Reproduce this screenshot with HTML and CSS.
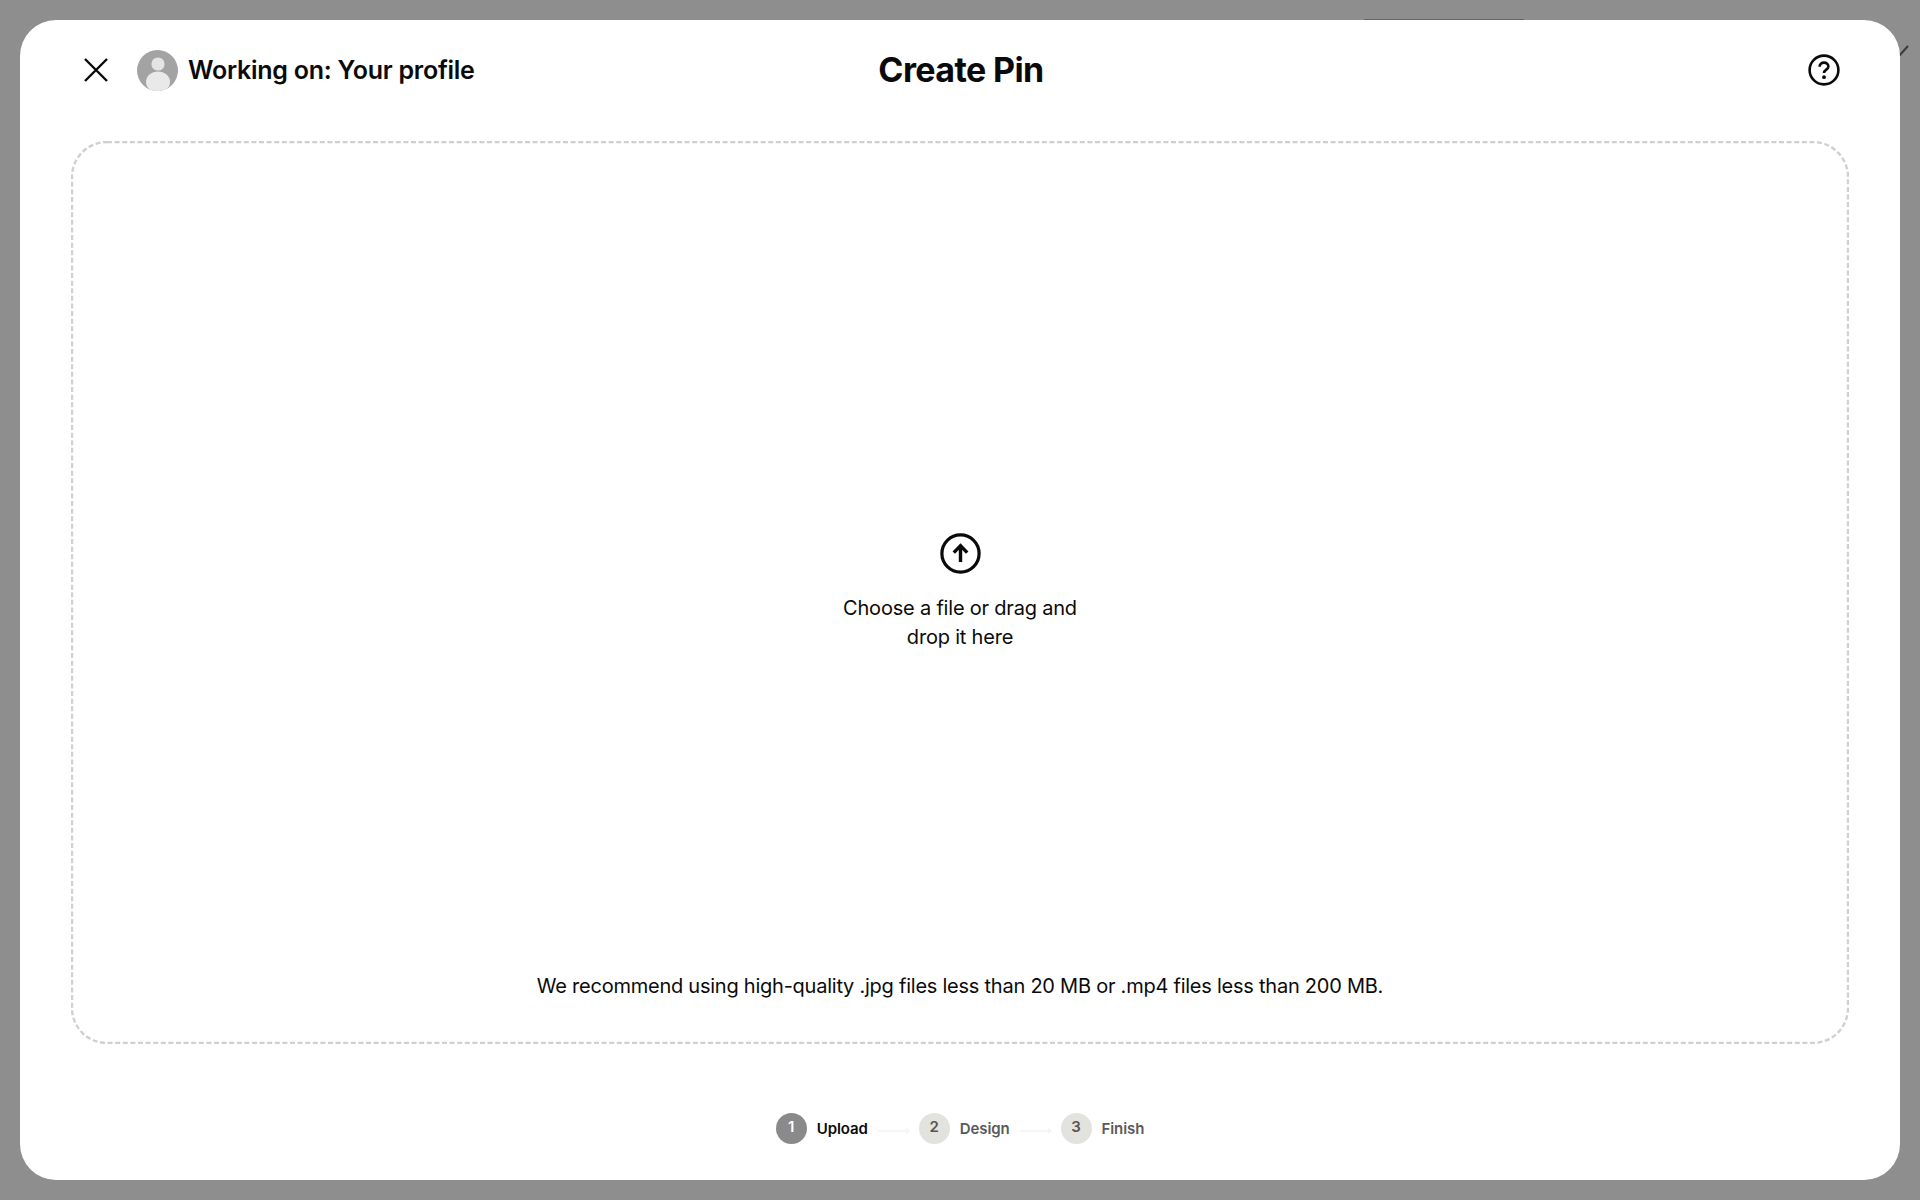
FILE: index.html
```html
<!DOCTYPE html>
<html lang="en">
<head>
<meta charset="utf-8">
<title>Create Pin</title>
<link rel="stylesheet" href="styles.css">
</head>
<body>
<div class="backdrop">
  <span class="peek-bar"></span>
  <svg class="peek-check" width="10" height="12" viewBox="0 0 10 12"><path d="M0 11 L9 1" fill="none" stroke="#3a3a3a" stroke-width="2"/></svg>
  <main class="modal">
    <header class="topbar">
      <div class="topbar-left">
        <button class="icon-btn" aria-label="Close">
          <svg width="28" height="28" viewBox="0 0 28 28"><path d="M4 3 L26 25 M26 3 L4 25" fill="none" stroke="#0a0a0a" stroke-width="2.4"/></svg>
        </button>
        <svg class="avatar" width="41" height="41" viewBox="0 0 41 41"><defs><clipPath id="av"><circle cx="20.5" cy="20.5" r="20.5"/></clipPath></defs><circle cx="20.5" cy="20.5" r="20.5" fill="#a3a3a3"/><g clip-path="url(#av)"><circle cx="21" cy="14" r="6.6" fill="#e4e4e4"/><ellipse cx="21" cy="32" rx="12" ry="10.5" fill="#e9e9e9"/></g></svg>
        <span class="working">Working on: Your profile</span>
      </div>
      <h1 class="title">Create Pin</h1>
      <div class="topbar-right">
        <svg width="32" height="32" viewBox="0 0 32 32"><circle cx="16" cy="16" r="14.4" fill="none" stroke="#0a0a0a" stroke-width="2.6"/><path d="M11.6 12.8 C11.6 10 13.6 8.6 16 8.6 C18.6 8.6 20.4 10.2 20.4 12.4 C20.4 15.6 16 15.6 16 19" fill="none" stroke="#0a0a0a" stroke-width="2.6"/><circle cx="16" cy="23.2" r="1.9" fill="#0a0a0a"/></svg>
      </div>
    </header>
    <section class="dropzone">
      <svg class="dash-frame" aria-hidden="true"><rect class="dash-rect" rx="35" ry="35"/></svg>
      <div class="drop-center">
        <svg width="41" height="41" viewBox="0 0 41 41"><circle cx="20.5" cy="20.5" r="18.6" fill="none" stroke="#0a0a0a" stroke-width="3.2"/><path d="M20.5 29 V13.5 M13.8 19.6 L20.5 12.6 L27.2 19.6" fill="none" stroke="#0a0a0a" stroke-width="3.4"/></svg>
        <p class="drop-text">Choose a file or drag and<br>drop it here</p>
      </div>
      <p class="recommend">We recommend using high-quality .jpg files less than 20 MB or .mp4 files less than 200 MB.</p>
    </section>
    <nav class="stepper">
      <span class="step-num step-num-active">1</span>
      <span class="step-label step-label-active">Upload</span>
      <svg class="step-arrow" width="32" height="6" viewBox="0 0 32 6"><path d="M0 3 H31 M28 0.5 L31 3 L28 5.5" fill="none" stroke="#ececec" stroke-width="1"/></svg>
      <span class="step-num">2</span>
      <span class="step-label">Design</span>
      <svg class="step-arrow" width="32" height="6" viewBox="0 0 32 6"><path d="M0 3 H31 M28 0.5 L31 3 L28 5.5" fill="none" stroke="#ececec" stroke-width="1"/></svg>
      <span class="step-num">3</span>
      <span class="step-label">Finish</span>
    </nav>
  </main>
</div>
</body>
</html>
```
FILE: styles.css
```css
* { box-sizing: border-box; }
html, body { margin: 0; height: 100%; }
body { font-family: Inter, "Liberation Sans", sans-serif; color: #0a0a0a; background: #8e8e8e; }
.backdrop { position: relative; height: 1200px; padding: 20px; background: #8e8e8e; overflow: hidden; }
.peek-bar { position: absolute; left: 1364px; top: 19px; width: 160px; height: 2px; background: #666; }
.peek-check { position: absolute; left: 1899px; top: 45px; }
.modal { position: relative; height: 1160px; background: #fff; border-radius: 36px; display: flex; flex-direction: column; padding: 0 51px; }
.topbar { height: 121px; padding: 0 8px 21px 10px; display: grid; grid-template-columns: 1fr auto 1fr; align-items: center; flex: none; }
.topbar-left { display: flex; align-items: center; }
.icon-btn { border: 0; padding: 0; background: none; width: 28px; height: 28px; display: block; margin-right: 28px; }
.icon-btn svg, .topbar-right svg { display: block; }
.avatar { margin-right: 10px; flex: none; }
.working { font-size: 25px; font-weight: 600; letter-spacing: -0.25px; white-space: nowrap; }
.title { margin: 0; font-size: 34px; font-weight: 700; letter-spacing: -0.6px; line-height: 42px; }
.topbar-right { display: flex; justify-content: flex-end; margin-right: 1px; }
.dropzone { position: relative; height: 903px; flex: none; display: flex; flex-direction: column; align-items: center; padding-top: 392px; }
.dash-frame { position: absolute; inset: 0; width: 100%; height: 100%; }
.dash-rect { x: 1px; y: 1px; width: calc(100% - 2px); height: calc(100% - 2px); fill: none; stroke: #d0d0d0; stroke-width: 2.4px; stroke-dasharray: 5 2.6; }
.drop-center { display: flex; flex-direction: column; align-items: center; }
.drop-text { margin: 20px 0 0; font-size: 20px; line-height: 29px; text-align: center; letter-spacing: -0.2px; }
.recommend { margin: auto 0 44px; font-size: 20px; line-height: 28px; letter-spacing: -0.24px; white-space: nowrap; }
.stepper { flex: 1; display: flex; align-items: center; justify-content: center; padding: 32px 0 0 0; }
.step-num { width: 31px; height: 31px; border-radius: 50%; background: #e2e2df; color: #555; font-size: 15px; font-weight: 600; display: flex; align-items: center; justify-content: center; padding-bottom: 3px; }
.step-num-active { background: #8a8a8a; color: #fff; }
.step-label { margin-left: 10px; font-size: 15px; font-weight: 600; letter-spacing: -0.1px; color: #5a5a5a; }
.step-label-active { color: #0a0a0a; }
.step-arrow { margin: 6px 9px 0 10px; }
```
